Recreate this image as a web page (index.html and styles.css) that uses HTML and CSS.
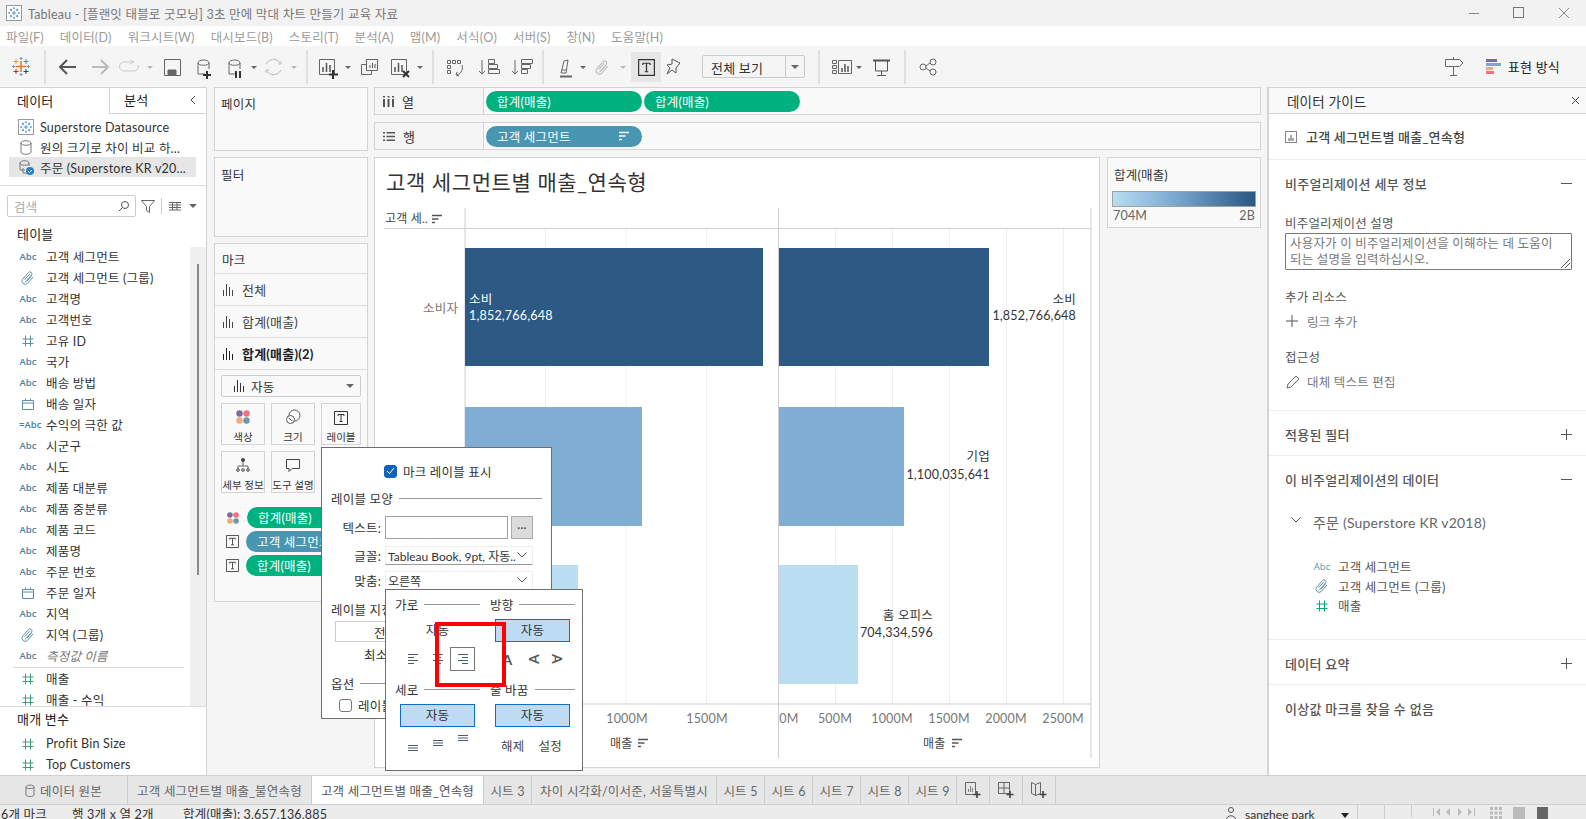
FILE: index.html
```html
<!DOCTYPE html>
<html lang="ko">
<head>
    <meta charset="utf-8">
    <title>Tableau</title>
    <link rel="stylesheet" href="styles.css">
</head>
<body>
<svg class="defs" width="0" height="0">
    <symbol id="i-clip" viewBox="0 0 16 16"><path d="M5 12.5 11.6 5a2 2 0 0 0-3-2.6L2.6 9.2a3.2 3.2 0 0 0 4.8 4.2L13 7M4.6 9.7l5-5.6M7 11l4.6-5.2" fill="none" stroke="currentColor"/></symbol>
    <symbol id="i-hash" viewBox="0 0 16 16"><path d="M5.5 2.5v11M10.5 2.500v11M2.500 6h11M2.500 10.500h11" fill="none" stroke="currentColor"/></symbol>
    <symbol id="i-cal" viewBox="0 0 16 16"><path d="M2.500 4.500h11v9h-11zM2.500 7h11M5.500 2.500v2M10.500 2.500v2" fill="none" stroke="currentColor"/></symbol>
    <symbol id="i-bars" viewBox="0 0 12 14"><path d="M1.500 13V7M4.500 13V1M7.500 13V4M10.500 13V7" fill="none" stroke="currentColor"/></symbol>
    <symbol id="i-t" viewBox="0 0 14 14"><path d="M.5.500h13v13H.5z" fill="none" stroke="currentColor"/><path d="M4 3.500h6M4 3.500v1.500M10 3.500v1.500M7 3.500v7M5.500 10.500h3" fill="none" stroke="currentColor"/></symbol>
    <symbol id="i-sort" viewBox="0 0 11 11"><path d="M0 1.500h10M0 5h6.500M0 8.500h3" fill="none" stroke="currentColor" stroke-width="1.600"/></symbol>
    <symbol id="i-dots" viewBox="0 0 16 16"><circle cx="4.500" cy="4.500" r="3.200" fill="#7f6a9c"/><circle cx="11.500" cy="4.500" r="3.200" fill="#f0717f"/><circle cx="4.500" cy="11.500" r="3.200" fill="#f1a97e"/><circle cx="11.500" cy="11.500" r="3.200" fill="#6b97a8"/></symbol>
    <symbol id="i-logo" viewBox="0 0 16 16"><path d="M8 5.500v5M5.500 8h5M4.500 3v3M3 4.500h3M11.500 3v3M10 4.500h3M4.500 10v3M3 11.500h3M11.500 10v3M10 11.500h3M8 1.500v2M7 2.500h2M8 12.500v2M7 13.500h2M2.500 7v2M1.500 8h2M13.500 7v2M12.500 8h2" fill="none" stroke="currentColor" stroke-width=".9"/></symbol>
</svg>

<header class="titlebar">
    <svg class="app-icon" width="16" height="16"><rect x=".5" y=".5" width="15" height="15" fill="#fff" stroke="#999"/><use href="#i-logo" x="1" y="1" width="14" height="14" color="#2f7fb3"/></svg>
    <span class="app-title">Tableau - [플랜잇 태블로 굿모닝] 3초 만에 막대 차트 만들기 교육 자료</span>
    <div class="win-btns">
        <svg width="12" height="12"><path d="M1 6.500h10" stroke="#888"/></svg>
        <svg width="12" height="12"><rect x=".5" y=".5" width="10" height="10" fill="none" stroke="#777"/></svg>
        <svg width="12" height="12"><path d="M1 1l10 10M11 1 1 11" stroke="#888"/></svg>
    </div>
</header>

<nav class="menubar">
    <span>파일(F)</span><span>데이터(D)</span><span>워크시트(W)</span><span>대시보드(B)</span><span>스토리(T)</span><span>분석(A)</span><span>맵(M)</span><span>서식(O)</span><span>서버(S)</span><span>창(N)</span><span>도움말(H)</span>
</nav>

<div class="toolbar">
    <svg class="tb-strip" width="694" height="41" viewBox="0 46 694 41" fill="none" stroke="#666">
        <!-- logo -->
        <path d="M21 61v11M15.500 66.500h11" stroke="#e8762c" stroke-width="1.500"/>
        <path d="M16 59v5M13.500 61.500h5" stroke="#e8a13c"/><path d="M26 59v5M23.500 61.500h5" stroke="#5b879b"/>
        <path d="M16 69v5M13.500 71.500h5" stroke="#c72037"/><path d="M26 69v5M23.500 71.500h5" stroke="#1f447a"/>
        <path d="M21 57v3M19.500 58.500h3M21 73v3M19.500 74.500h3M13.500 65v3M12 66.500h3M28.500 65v3M27 66.500h3" stroke="#7099a6"/>
        <path d="M45 50v34M307 50v34M433 50v34M543 50v34" stroke="#ccc"/>
        <!-- back / forward -->
        <path d="M76 67H60M67 60l-7 7 7 7" stroke="#555" stroke-width="2"/>
        <path d="M108 67H92M101 60l7 7-7 7" stroke="#bbb" stroke-width="2"/>
        <path d="M133 62h-9a4.500 4.500 0 0 0 0 9h10a4.500 4.500 0 0 0 4-6M130 60l4 2-4 2" stroke="#ccc"/>
        <path d="M147 66h6l-3 3z" fill="#bbb" stroke="none"/>
        <!-- save -->
        <path d="M164.500 59.500h16v16h-16z"/><path d="M168 70h8v5h-8z" fill="#666"/>
        <!-- data source add / pause -->
        <path d="M198 63v11h7M198 63c0-4 11-4 11 0v6M198 63c0 3 11 3 11 0"/>
        <path d="M207 71v8M203 75h8" stroke="#333" stroke-width="2"/>
        <path d="M229 63v11h6M229 63c0-4 11-4 11 0v6M229 63c0 3 11 3 11 0"/>
        <path d="M236 71v7M240 71v7" stroke="#333" stroke-width="2"/>
        <path d="M251 66h6l-3 3z" fill="#666" stroke="none"/>
        <path d="M266 64a8 8 0 0 1 14-1M281 70a8 8 0 0 1-14 1M278 64h3v-3M269 70h-3v3" stroke="#bbb"/>
        <path d="M291 66h6l-3 3z" fill="#bbb" stroke="none"/>
        <!-- new sheet, duplicate, clear -->
        <path d="M319.500 59.500h15v15h-15z"/><path d="M323 72v-5M326.500 72v-9M330 72v-7" stroke="#555" stroke-width="1.500"/>
        <path d="M333 70v9M329 74.500h9" stroke="#333" stroke-width="2"/>
        <path d="M345 66h6l-3 3z" fill="#666" stroke="none"/>
        <path d="M366.500 59.500h11v11h-11zM361.500 64.500h5M361.500 64.500v10h10v-4" /><path d="M370 68v-3M372.500 68v-5M375 68v-4" stroke="#555"/>
        <path d="M391.500 59.500h15v15h-15z"/><path d="M395 72v-5M398.500 72v-9M402 72v-7" stroke="#555" stroke-width="1.500"/>
        <path d="M403 71l6 6M409 71l-6 6" stroke="#333" stroke-width="2"/>
        <path d="M417 66h6l-3 3z" fill="#666" stroke="none"/>
        <!-- swap, sort -->
        <path d="M447.500 60.500h3v3h-3zM452.500 60.500h3v3h-3zM457.500 60.500h3v3h-3zM447.500 65.500h3v3h-3zM447.500 70.500h3v3h-3zM462 65c1 4 0 8-5 10M457 72l-1 3 3 1"/>
        <path d="M482 60v14M479 71l3 3 3-3M488.500 59.500h6v4h-6zM488.500 64.500h9v4h-9zM488.500 69.500h11v4h-11z"/>
        <path d="M515 60v14M512 71l3 3 3-3M521.500 59.500h11v4h-11zM521.500 64.500h9v4h-9zM521.500 69.500h6v4h-6z"/>
        <!-- highlight, attach -->
        <path d="M561 73l3-12 4-1-2 13z M562 70h5" stroke="#666"/><path d="M560 76.500h12" stroke="#666" stroke-width="2"/>
        <path d="M580 66h6l-3 3z" fill="#666" stroke="none"/>
        <use href="#i-clip" x="594" y="59" width="17" height="17" color="#bbb" stroke="none"/>
        <path d="M620 66h6l-3 3z" fill="#bbb" stroke="none"/>
        <!-- text button, pin -->
        <rect x="631" y="52" width="30" height="30" fill="#e6e6e6" stroke="none"/>
        <use href="#i-t" x="638" y="59" width="17" height="17" color="#333" stroke="none"/>
        <path d="M672 59l8 4-4 5 0 5-4-3-5 4 3-6-3-3 5-1z" stroke="#555"/>
    </svg>
    <div class="fit-select"><span class="fit-text">전체 보기</span><span class="fit-arrow"></span></div>
    <svg class="tb-strip" width="135" height="41" viewBox="809 46 135 41" fill="none" stroke="#666">
        <path d="M821 50v34M907 50v34" stroke="#ccc"/>
        <path d="M834.500 60.500h4v3h-4zM834.500 65.500h4v3h-4zM834.500 70.500h4v3h-4zM840.500 60.500h13v13h-13z"/>
        <path d="M844 72v-4M847 72v-8M850 72v-6" stroke="#555" stroke-width="1.500"/>
        <path d="M858 66h6l-3 3z" fill="#666" stroke="none"/>
        <path d="M877.500 61v10h12V61M883.500 71v5M879 75.500h9" stroke="#555"/><path d="M875 60.500h17" stroke="#555" stroke-width="2"/>
        <circle cx="935" cy="62" r="3"/><circle cx="925" cy="67" r="3"/><circle cx="935" cy="72" r="3"/><path d="M928 66l4-3M928 68l4 3"/>
    </svg>
    <div class="tb-right">
        <svg width="20" height="20" fill="none" stroke="#666"><path d="M1.500 2.500h14l3.500 3.500-3.500 3.500h-14zM9.500 2.500V0M9.500 9.500v9M6 18.500h7"/></svg>
        <svg class="showme-icon" width="15" height="15"><rect width="11" height="3" fill="#7f6a9c"/><rect y="4" width="15" height="3" fill="#7fa6c9"/><rect y="8" width="7" height="3" fill="#f1a97e"/><rect y="12" width="8" height="3" fill="#f0717f"/></svg>
        <span class="showme-text">표현 방식</span>
    </div>
</div>

<main class="workspace">
    <aside class="data-pane">
        <div class="pane-tabs">
            <div class="pane-tab active">데이터</div>
            <div class="pane-tab">분석</div>
            <svg class="collapse" width="8" height="10" fill="none" stroke="#555"><path d="M6 1 2 5l4 4"/></svg>
        </div>
        <div class="sources">
            <div class="source">
                <svg width="16" height="16"><rect x=".5" y=".5" width="15" height="15" fill="#fff" stroke="#999"/><use href="#i-logo" x="1" y="1" width="14" height="14" color="#2f7fb3"/></svg>
                <span>Superstore Datasource</span>
            </div>
            <div class="source">
                <svg width="16" height="16" fill="none" stroke="#777"><path d="M3 4v9c0 3 10 3 10 0V4M3 4c0-3 10-3 10 0M3 4c0 3 10 3 10 0"/></svg>
                <span>원의 크기로 차이 비교 하...</span>
            </div>
            <div class="source selected">
                <svg width="16" height="16" fill="none" stroke="#777"><path d="M2 4v7h5M2 4c0-3 9-3 9 0v3M2 4c0 3 9 3 9 0M5 9v5h4"/><circle cx="12" cy="12" r="4" fill="#2c7fb8" stroke="none"/><path d="M10 12l1.500 1.500L14 11" stroke="#fff"/></svg>
                <span>주문 (Superstore KR v20...</span>
            </div>
        </div>
        <div class="search-row">
            <div class="search-box"><span>검색</span>
                <svg width="12" height="12" fill="none" stroke="#555"><circle cx="7" cy="5" r="3.500"/><path d="M4.500 7.500 1 11"/></svg>
            </div>
            <svg class="filter-icon" width="14" height="14" fill="none" stroke="#666"><path d="M.5 1.500h13L8.500 7.500v6l-3-2v-4z"/></svg>
            <span class="search-sep"></span>
            <svg width="14" height="10" fill="none" stroke="#666"><path d="M1 1.500h12M1 4h12M1 6.500h12M1 9h12M4.500 1v8M9 1v8"/></svg>
            <span class="mini-arrow"></span>
        </div>
        <div class="group-title">테이블</div>
        <div class="field-scroll">
            <div class="scroll-track"><div class="scroll-thumb"></div></div>
            <div class="field"><span class="abc">Abc</span>고객 세그먼트</div>
            <div class="field"><svg class="fi dim" width="16" height="16"><use href="#i-clip"/></svg>고객 세그먼트 (그룹)</div>
            <div class="field"><span class="abc">Abc</span>고객명</div>
            <div class="field"><span class="abc">Abc</span>고객번호</div>
            <div class="field"><svg class="fi dim" width="16" height="16"><use href="#i-hash"/></svg>고유 ID</div>
            <div class="field"><span class="abc">Abc</span>국가</div>
            <div class="field"><span class="abc">Abc</span>배송 방법</div>
            <div class="field"><svg class="fi dim" width="16" height="16"><use href="#i-cal"/></svg>배송 일자</div>
            <div class="field"><span class="abc">=Abc</span>수익의 극한 값</div>
            <div class="field"><span class="abc">Abc</span>시군구</div>
            <div class="field"><span class="abc">Abc</span>시도</div>
            <div class="field"><span class="abc">Abc</span>제품 대분류</div>
            <div class="field"><span class="abc">Abc</span>제품 중분류</div>
            <div class="field"><span class="abc">Abc</span>제품 코드</div>
            <div class="field"><span class="abc">Abc</span>제품명</div>
            <div class="field"><span class="abc">Abc</span>주문 번호</div>
            <div class="field"><svg class="fi dim" width="16" height="16"><use href="#i-cal"/></svg>주문 일자</div>
            <div class="field"><span class="abc">Abc</span>지역</div>
            <div class="field"><svg class="fi dim" width="16" height="16"><use href="#i-clip"/></svg>지역 (그룹)</div>
            <div class="field measure-names"><span class="abc">Abc</span><em>측정값 이름</em></div>
            <div class="field-sep"></div>
            <div class="field"><svg class="fi green" width="16" height="16"><use href="#i-hash"/></svg>매출</div>
            <div class="field"><svg class="fi green" width="16" height="16"><use href="#i-hash"/></svg>매출 - 수익</div>
        </div>
        <div class="params">
            <div class="group-title">매개 변수</div>
            <div class="field"><svg class="fi green" width="16" height="16"><use href="#i-hash"/></svg>Profit Bin Size</div>
            <div class="field"><svg class="fi green" width="16" height="16"><use href="#i-hash"/></svg>Top Customers</div>
        </div>
    </aside>

    <section class="side-cards">
        <div class="card pages">페이지</div>
        <div class="card filters">필터</div>
        <div class="card marks">
            <div class="marks-title">마크</div>
            <div class="marks-row"><svg width="12" height="14"><use href="#i-bars"/></svg>전체</div>
            <div class="marks-row"><svg width="12" height="14"><use href="#i-bars"/></svg>합계(매출)</div>
            <div class="marks-row bold"><svg width="12" height="14"><use href="#i-bars"/></svg>합계(매출)(2)</div>
            <div class="mark-type"><svg width="12" height="14"><use href="#i-bars"/></svg><span>자동</span><i class="mini-arrow"></i></div>
            <div class="mark-btns">
                <div class="mark-btn"><svg width="16" height="16"><use href="#i-dots"/></svg>색상</div>
                <div class="mark-btn"><svg width="16" height="16" fill="none" stroke="#555"><circle cx="9.500" cy="6.500" r="5.500" fill="#fff"/><circle cx="5.500" cy="10.500" r="4" fill="#fff"/><path d="M3.500 9l4 3"/></svg>크기</div>
                <div class="mark-btn"><svg width="14" height="14"><use href="#i-t"/></svg>레이블</div>
                <div class="mark-btn"><svg width="16" height="16" fill="#444" stroke="#444"><circle cx="8" cy="3" r="2" stroke="none"/><path d="M8 3v6M3 12V9h10v3" fill="none" stroke-width=".8"/><circle cx="3" cy="13" r="1.300" fill="none"/><circle cx="8" cy="13" r="1.300" fill="none"/><circle cx="13" cy="13" r="1.300" fill="none"/></svg>세부 정보</div>
                <div class="mark-btn"><svg width="16" height="16" fill="none" stroke="#444"><path d="M1.500 2.500h13v9H7l-3 3v-3H1.500z"/></svg>도구 설명</div>
            </div>
            <div class="mark-pills">
                <div class="mark-pill-row"><svg width="14" height="14"><use href="#i-dots"/></svg><div class="pill measure">합계(매출)</div></div>
                <div class="mark-pill-row"><svg width="13" height="13" color="#444"><use href="#i-t"/></svg><div class="pill dimension">고객 세그먼트</div></div>
                <div class="mark-pill-row"><svg width="13" height="13" color="#444"><use href="#i-t"/></svg><div class="pill measure">합계(매출)</div></div>
            </div>
        </div>
    </section>

    <section class="view-area">
        <div class="shelf">
            <div class="shelf-label"><svg width="11" height="11" fill="#555"><path d="M0 3h2v8H0zM4.500 3h2v8h-2zM9 3h2v8H9zM0 0h2v1.500H0zM4.500 0h2v1.500h-2zM9 0h2v1.500H9z"/></svg>열</div>
            <div class="shelf-pills"><div class="pill measure">합계(매출)</div><div class="pill measure">합계(매출)</div></div>
        </div>
        <div class="shelf">
            <div class="shelf-label"><svg width="12" height="11" fill="#555"><path d="M0 1h2v1.500H0zM3.500 1H12v1.500H3.500zM0 4.700h2v1.500H0zM3.500 4.700H12v1.500H3.500zM0 8.500h2V10H0zM3.500 8.500H12V10H3.500z"/></svg>행</div>
            <div class="shelf-pills"><div class="pill dimension">고객 세그먼트<svg class="pill-sort" width="11" height="11"><use href="#i-sort"/></svg></div></div>
        </div>
        <div class="view-row">
            <div class="chart-card">
                <h1 class="chart-title">고객 세그먼트별 매출_연속형</h1>
                <svg class="chart" width="724" height="561" viewBox="375 206 724 561">
                    <path d="M545.500 229v475M626 229v475M706.500 229v475M835.500 229v475M892.500 229v475M949.500 229v475M1006.500 229v475M1063.500 229v475" stroke="#eee"/>
                    <path d="M384 228.500h707M384 704h707M465 208v550M778.500 208v550M1091 208v550" stroke="#cfcfcf" fill="none"/>
                    <text class="hdr" x="385" y="223">고객 세..</text>
                    <use href="#i-sort" x="432" y="214" width="11" height="11" color="#555"/>
                    <text class="axis" x="423" y="313">소비자</text>

                    <rect class="dark" x="465" y="248" width="298" height="118"/>
                    <rect class="mid" x="465" y="407" width="177" height="119"/>
                    <rect class="light" x="465" y="565" width="113" height="119"/>
                    <rect class="dark" x="779" y="248" width="210" height="118"/>
                    <rect class="mid" x="779" y="407" width="125" height="119"/>
                    <rect class="light" x="779" y="565" width="79" height="119"/>

                    <text class="lbl-in" x="469" y="304">소비</text>
                    <text class="lbl-in" x="469" y="320">1,852,766,648</text>
                    <text class="lbl end" x="1076" y="304">소비</text>
                    <text class="lbl end" x="1076" y="320">1,852,766,648</text>
                    <text class="lbl end" x="990" y="461">기업</text>
                    <text class="lbl end" x="990" y="479">1,100,035,641</text>
                    <text class="lbl end" x="933" y="620">홈 오피스</text>
                    <text class="lbl end" x="933" y="637">704,334,596</text>

                    <text class="axis mid-a" x="627" y="723">1000M</text>
                    <text class="axis mid-a" x="707" y="723">1500M</text>
                    <text class="axis mid-a" x="789" y="723">0M</text>
                    <text class="axis mid-a" x="835" y="723">500M</text>
                    <text class="axis mid-a" x="892" y="723">1000M</text>
                    <text class="axis mid-a" x="949" y="723">1500M</text>
                    <text class="axis mid-a" x="1006" y="723">2000M</text>
                    <text class="axis mid-a" x="1063" y="723">2500M</text>
                    <text class="hdr" x="610" y="748">매출</text>
                    <use href="#i-sort" x="638" y="738" width="11" height="11" color="#555"/>
                    <text class="hdr" x="923" y="748">매출</text>
                    <use href="#i-sort" x="952" y="738" width="11" height="11" color="#555"/>
                </svg>
            </div>
            <div class="legend-card">
                <div class="legend-title">합계(매출)</div>
                <div class="legend-ramp"></div>
                <div class="legend-scale"><span>704M</span><span>2B</span></div>
            </div>
        </div>
    </section>

    <aside class="guide">
        <div class="guide-head">데이터 가이드<svg width="9" height="9" stroke="#444"><path d="M1 1l7 7M8 1 1 8"/></svg></div>
        <div class="guide-sheet">
            <svg width="12" height="12"><rect x=".5" y=".5" width="11" height="11" fill="#fff" stroke="#888"/><path d="M3 10V7h2V4h2v3h2v3z" fill="#aaa"/></svg>
            고객 세그먼트별 매출_연속형
        </div>
        <div class="guide-sec detail">
            <div class="sec-head">비주얼리제이션 세부 정보<span class="minus"></span></div>
            <div class="sub first">비주얼리제이션 설명</div>
            <div class="desc-box">사용자가 이 비주얼리제이션을 이해하는 데 도움이<br>되는 설명을 입력하십시오.<svg class="grip" width="9" height="9" stroke="#555"><path d="M0 9l9-9M4 9l5-5"/></svg></div>
            <div class="sub">추가 리소스</div>
            <div class="guide-link"><svg width="12" height="12" stroke="#555"><path d="M6 0v12M0 6h12"/></svg>링크 추가</div>
            <div class="sub">접근성</div>
            <div class="guide-link pencil"><svg width="15" height="15" fill="none" stroke="#666"><path d="M1 14l1-4 8-8 3 3-8 8z"/></svg>대체 텍스트 편집</div>
        </div>
        <div class="guide-sec short"><div class="sec-head">적용된 필터<span class="plus"></span></div></div>
        <div class="guide-sec data">
            <div class="sec-head">이 비주얼리제이션의 데이터<span class="minus"></span></div>
            <div class="ds-name"><svg width="10" height="6" fill="none" stroke="#555"><path d="M.5.500 5 5 9.500.500"/></svg>주문 (Superstore KR v2018)</div>
            <div class="guide-field"><span class="abc">Abc</span>고객 세그먼트</div>
            <div class="guide-field"><svg class="fi dim" width="16" height="16"><use href="#i-clip"/></svg>고객 세그먼트 (그룹)</div>
            <div class="guide-field"><svg class="fi teal" width="16" height="16"><use href="#i-hash"/></svg>매출</div>
        </div>
        <div class="guide-sec short"><div class="sec-head">데이터 요약<span class="plus"></span></div></div>
        <div class="guide-sec"><div class="sec-head">이상값 마크를 찾을 수 없음</div></div>
    </aside>
</main>

<div class="sheet-tabs">
    <div class="tab tab-src"><svg width="10" height="13" fill="none" stroke="#777"><path d="M1 3v8c0 2 8 2 8 0V3M1 3c0-2.500 8-2.500 8 0M1 3c0 2 8 2 8 0"/></svg>데이터 원본</div>
    <div class="tab t184">고객 세그먼트별 매출_불연속형</div>
    <div class="tab active t172">고객 세그먼트별 매출_연속형</div>
    <div class="tab t48">시트 3</div>
    <div class="tab t185">차이 시각화/이서준, 서울특별시</div>
    <div class="tab t48">시트 5</div>
    <div class="tab t48">시트 6</div>
    <div class="tab t48">시트 7</div>
    <div class="tab t48">시트 8</div>
    <div class="tab t48">시트 9</div>
    <div class="tab t33"><svg width="18" height="18" fill="none" stroke="#666"><path d="M1.500 1.500h10v12h-10z"/><path d="M4.500 11V8M6.500 11V5M8.500 11V7" stroke-width=".8"/><path d="M13 10v7M9.500 13.500h7" stroke="#444" stroke-width="1.600"/></svg></div>
    <div class="tab t33"><svg width="18" height="18" fill="none" stroke="#666"><path d="M1.500 1.500h11v11h-11zM7 1.500v11M1.500 7h11"/><path d="M13 10v7M9.500 13.500h7" stroke="#444" stroke-width="1.600"/></svg></div>
    <div class="tab t33"><svg width="18" height="18" fill="none" stroke="#666"><path d="M1.500 1.500l4 2 5-2v11l-5 2-4-2zM5.500 3.500v11"/><path d="M13 10v7M9.500 13.500h7" stroke="#444" stroke-width="1.600"/></svg></div>
</div>

<footer class="statusbar">
    <span class="st-marks">6개 마크</span>
    <span class="st-dims">행 3개 x 열 2개</span>
    <span class="st-sum">합계(매출): 3,657,136,885</span>
    <span class="st-user"><svg width="12" height="14" fill="none" stroke="#555"><circle cx="6" cy="3" r="2.500"/><path d="M1 14c0-7 10-7 10 0"/></svg>sanghee park<i class="user-arrow"></i></span>
    <span class="st-cell"></span><span class="st-cell"></span>
    <span class="st-nav">
        <svg width="46" height="10" fill="#bbb"><path d="M2 1v8h1V1zM9 1 5 5l4 4zM19 1l-4 4 4 4zM27 1l4 4-4 4zM37 1l4 4-4 4zM43 1v8h1V1z"/></svg>
    </span>
    <span class="st-views">
        <svg width="12" height="12" fill="#bbb"><path d="M0 0h3v3H0zM4.500 0h3v3h-3zM9 0h3v3H9zM0 4.500h3v3H0zM4.500 4.500h3v3h-3zM9 4.500h3v3H9zM0 9h3v3H0zM4.500 9h3v3h-3zM9 9h3v3H9z"/></svg>
        <svg width="12" height="12" fill="#bbb"><path d="M0 0h12v12H0z"/></svg>
        <svg width="12" height="12" fill="#666"><path d="M1 0h11v14H1z"/></svg>
    </span>
</footer>

<!-- 레이블 팝업 -->
<div class="popup label-popup">
    <div class="check-row"><span class="check on"><svg width="9" height="8" fill="none" stroke="#fff"><path d="M1 4l2.500 2.500L8 1"/></svg></span>마크 레이블 표시</div>
    <div class="pop-sec first-sec">레이블 모양<span class="rule"></span></div>
    <div class="form-row r1"><label>텍스트:</label><span class="text-input"></span><span class="more-btn">...</span></div>
    <div class="form-row"><label>글꼴:</label><span class="select">Tableau Book, 9pt, 자동..<svg width="10" height="6" fill="none" stroke="#555"><path d="M.5.500 5 5 9.500.500"/></svg></span></div>
    <div class="form-row"><label>맞춤:</label><span class="select">오른쪽<svg width="10" height="6" fill="none" stroke="#555"><path d="M.5.500 5 5 9.500.500"/></svg></span></div>
    <div class="pop-sec assign">레이블 지정<span class="rule"></span></div>
    <div class="scope-btn">전</div>
    <div class="scope-min">최소</div>
    <div class="pop-sec opt">옵션<span class="rule"></span></div>
    <div class="check-row opt-check"><span class="check"></span>레이블</div>
</div>

<!-- 맞춤 팝업 -->
<div class="popup align-popup">
    <div class="pop-row head">
        <div class="pop-head">가로<span class="rule"></span></div>
        <div class="pop-head">방향<span class="rule"></span></div>
    </div>
    <div class="pop-row auto">
        <div class="auto-btn plain">자동</div>
        <div class="auto-btn on">자동</div>
    </div>
    <div class="pop-row icons">
        <div class="icon-set">
            <span class="ic"><svg width="12" height="10" stroke="#4a5a70"><path d="M1 .5h10M1 3.500h6M1 6.500h10M1 9.500h6"/></svg></span>
            <span class="ic"><svg width="12" height="10" stroke="#4a5a70"><path d="M1 .5h10M3 3.500h6M1 6.500h10M3 9.500h6"/></svg></span>
            <span class="ic picked"><svg width="12" height="10" stroke="#4a5a70"><path d="M1 .5h10M5 3.500h6M1 6.500h10M5 9.500h6"/></svg></span>
        </div>
        <div class="icon-set">
            <span class="ic rot">A</span><span class="ic rot left">A</span><span class="ic rot right">A</span>
        </div>
    </div>
    <div class="pop-row head second">
        <div class="pop-head">세로<span class="rule"></span></div>
        <div class="pop-head">줄 바꿈<span class="rule"></span></div>
    </div>
    <div class="pop-row auto">
        <div class="auto-btn on">자동</div>
        <div class="auto-btn on">자동</div>
    </div>
    <div class="pop-row icons last">
        <div class="icon-set">
            <span class="ic v-bottom"><svg width="12" height="6" stroke="#4a5a70"><path d="M1 .5h10M1 3h10M1 5.500h10"/></svg></span>
            <span class="ic v-mid"><svg width="12" height="6" stroke="#4a5a70"><path d="M1 .5h10M1 3h10M1 5.500h10"/></svg></span>
            <span class="ic v-top"><svg width="12" height="6" stroke="#4a5a70"><path d="M1 .5h10M1 3h10M1 5.500h10"/></svg></span>
        </div>
        <div class="wrap-set"><span>해제</span><span>설정</span></div>
    </div>
</div>

<div class="red-box"></div>
</body>
</html>
```

FILE: styles.css
```css
/* page */
* {
    box-sizing: border-box;
}

html, body {
    margin: 0;
    height: 819px;
    overflow: hidden;
}

body {
    position: relative;
    display: flex;
    flex-direction: column;
    width: 1586px;
    font-family: "Lato", "Noto Sans CJK KR", sans-serif;
    font-size: 12.5px;
    letter-spacing: .2px;
    color: #333;
    background: #f5f5f5;
}

svg {
    display: block;
    flex: none;
}

.defs {
    position: absolute;
}

/* window chrome */
.titlebar {
    display: flex;
    align-items: center;
    height: 26px;
    padding-left: 6px;
    background: #f2f2f2;
    color: #777;
}

.app-title {
    margin-left: 6px;
}

.win-btns {
    display: flex;
    gap: 33px;
    margin-left: auto;
    margin-right: 16px;
}

.menubar {
    display: flex;
    align-items: center;
    gap: 16px;
    height: 20px;
    padding-left: 6px;
    background: #fff;
    color: #9b9b9b;
}

.toolbar {
    display: flex;
    align-items: center;
    height: 41px;
    background: #f5f5f5;
}

.fit-select {
    display: flex;
    align-items: stretch;
    width: 103px;
    height: 23px;
    margin: 0 2px 0 8px;
    border: 1px solid #ccc;
    border-radius: 2px;
    background: #f5f5f5;
}

.fit-text {
    flex: 1;
    padding: 2px 0 0 8px;
    font-size: 13px;
    border-right: 1px solid #ccc;
}

.fit-arrow {
    position: relative;
    width: 18px;
}

.fit-arrow::after {
    content: "";
    position: absolute;
    left: 5px;
    top: 9px;
    border: 4px solid transparent;
    border-top: 4px solid #666;
}

.tb-right {
    display: flex;
    align-items: center;
    margin-left: auto;
    padding-right: 26px;
}

.showme-icon {
    margin-left: 22px;
}

.showme-text {
    margin-left: 7px;
    font-size: 13px;
    color: #222;
}

/* main layout */
.workspace {
    display: flex;
    height: 688px;
}

.data-pane {
    display: flex;
    flex-direction: column;
    width: 207px;
    background: #fff;
    border-right: 1px solid #d4d4d4;
    border-top: 1px solid #d4d4d4;
}

.pane-tabs {
    position: relative;
    display: flex;
    height: 26px;
}

.pane-tab {
    display: flex;
    align-items: center;
    padding: 0 0 2px 17px;
    width: 110px;
    font-size: 13px;
    color: #222;
    border-bottom: 1px solid #d4d4d4;
}

.pane-tab.active {
    border-bottom: 0;
    border-right: 1px solid #d4d4d4;
}

.pane-tab + .pane-tab {
    flex: 1;
    padding-left: 14px;
}

.collapse {
    position: absolute;
    right: 9px;
    top: 7px;
}

.sources {
    padding: 3px 0 5px 9px;
    height: 72px;
    border-bottom: 1px solid #ddd;
}

.source {
    display: flex;
    align-items: center;
    gap: 6px;
    width: 187px;
    height: 20px;
    padding-left: 9px;
    white-space: nowrap;
}

.source.selected {
    background: #e6e6e6;
}

.search-row {
    display: flex;
    align-items: center;
    height: 22px;
    margin-top: 9px;
    padding-left: 7px;
}

.search-box {
    display: flex;
    align-items: center;
    justify-content: space-between;
    width: 129px;
    height: 22px;
    padding: 0 5px 0 6px;
    border: 1px solid #ccc;
    border-radius: 2px;
    color: #aaa;
}

.filter-icon {
    margin-left: 5px;
}

.search-sep {
    width: 1px;
    height: 16px;
    margin: 0 6px;
    background: #ccc;
}

.mini-arrow {
    display: block;
    margin-left: 7px;
    border: 4px solid transparent;
    border-top: 4px solid #666;
    border-bottom: 0;
}

.group-title {
    height: 20px;
    padding: 0 0 0 17px;
    margin-top: 7px;
    font-size: 13px;
    line-height: 20px;
    color: #222;
}

.field-scroll {
    position: relative;
    height: 462px;
    padding-top: 2px;
    overflow: hidden;
}

.scroll-track {
    position: absolute;
    right: 0;
    top: 3px;
    bottom: 0;
    width: 16px;
    background: #f0f0f0;
}

.scroll-thumb {
    width: 2px;
    height: 311px;
    margin: 17px 0 0 7px;
    background: #8a8a8a;
}

.field {
    display: flex;
    align-items: center;
    height: 21px;
    padding-left: 19px;
    white-space: nowrap;
}

.abc {
    flex: none;
    width: 18px;
    margin-right: 9px;
    font-family: "Open Sans", sans-serif;
    font-size: 9.500px;
    font-weight: 600;
    letter-spacing: 0;
    text-align: center;
    color: #4c7f9f;
    white-space: nowrap;
}

.fi {
    margin: 0 10px 0 1px;
}

.dim {
    color: #5f8ea8;
}

.green {
    color: #3f9b77;
}

.teal {
    color: #00a878;
}

.measure-names em {
    color: #777;
}

.field-sep {
    width: 171px;
    height: 1px;
    margin: 1px 0 0 13px;
    background: #ddd;
}

.params {
    flex: 1;
    border-top: 1px solid #ddd;
}

.params .group-title {
    margin-top: 2px;
}

.params .field {
    height: 21px;
    position: relative;
    top: 4px;
}

/* shelves and cards */
.side-cards {
    display: flex;
    flex-direction: column;
    gap: 6px;
    width: 154px;
    margin-left: 7px;
}

.card {
    border: 1px solid #d4d4d4;
    background: #f9f9f9;
    color: #333;
}

.pages {
    height: 64px;
    padding: 6px 0 0 6px;
}

.filters {
    height: 80px;
    padding: 7px 0 0 6px;
}

.marks {
    height: 359px;
}

.marks-title {
    height: 30px;
    padding: 6px 0 0 7px;
    border-bottom: 1px solid #ddd;
}

.marks-row {
    display: flex;
    align-items: center;
    gap: 8px;
    height: 32px;
    padding-left: 7px;
    font-size: 13px;
    border-bottom: 1px solid #ddd;
    color: #444;
}

.marks-row.bold {
    font-weight: 700;
    color: #222;
}

.mark-type {
    display: flex;
    align-items: center;
    gap: 6px;
    width: 140px;
    height: 22px;
    margin: 5px 0 0 6px;
    padding-left: 11px;
    border: 1px solid #ccc;
    border-radius: 2px;
}

.mark-type span {
    flex: 1;
}

.mark-type .mini-arrow {
    margin-right: 6px;
}

.mark-btns {
    display: grid;
    grid-template-columns: 44px 44px 40px;
    grid-auto-rows: 42px;
    gap: 6px;
    margin: 6px 0 0 6px;
}

.mark-btn {
    display: flex;
    flex-direction: column;
    align-items: center;
    justify-content: flex-end;
    gap: 4px;
    border: 1px solid #d4d4d4;
    font-size: 10.500px;
    letter-spacing: 0;
    white-space: nowrap;
    color: #333;
}

.mark-pills {
    display: flex;
    flex-direction: column;
    gap: 3px;
    margin: 14px 0 0 11px;
}

.mark-pill-row {
    display: flex;
    align-items: center;
    gap: 7px;
}

.mark-pills .pill {
    width: 110px;
}

.pill {
    display: flex;
    align-items: center;
    justify-content: space-between;
    height: 21px;
    padding: 0 11px;
    border-radius: 11px;
    color: #fff;
    white-space: nowrap;
}

.measure {
    background: #00b180;
}

.dimension {
    background: #4996b2;
}

.view-area {
    display: flex;
    flex-direction: column;
    width: 887px;
    margin-left: 6px;
}

.shelf {
    display: flex;
    height: 28px;
    margin-bottom: 7px;
    border: 1px solid #d4d4d4;
    background: #f9f9f9;
}

.shelf-label {
    display: flex;
    align-items: center;
    gap: 8px;
    width: 109px;
    padding-left: 8px;
    font-size: 13px;
    background: #f5f5f5;
    border-right: 1px solid #d4d4d4;
}

.shelf-pills {
    display: flex;
    align-items: center;
    gap: 2px;
    padding-left: 2px;
}

.shelf-pills .pill {
    width: 156px;
}

.pill-sort {
    margin-right: 1px;
}

.view-row {
    display: flex;
    gap: 7px;
    margin-top: 0;
}

.chart-card {
    width: 726px;
    height: 611px;
    border: 1px solid #d4d4d4;
    background: #fff;
    overflow: hidden;
}

.chart-title {
    height: 48px;
    margin: 0;
    padding: 9px 0 0 11px;
    font-size: 21px;
    font-weight: 400;
    letter-spacing: .6px;
    line-height: 30px;
    color: #333;
}

.chart text {
    font-family: "Lato", "Noto Sans CJK KR", sans-serif;
    font-size: 12.5px;
    letter-spacing: .2px;
}

.chart .hdr {
    font-size: 12px;
    fill: #444;
}

.chart .axis {
    fill: #777;
}

.chart .mid-a {
    text-anchor: middle;
}

.chart .lbl {
    fill: #333;
}

.chart .end {
    text-anchor: end;
}

.chart .lbl-in {
    fill: #fff;
}

.dark {
    fill: #2c5a85;
}

.mid {
    fill: #7fadd3;
}

.light {
    fill: #b9ddf1;
}

.legend-card {
    width: 154px;
    height: 71px;
    padding: 7px 4px 0;
    border: 1px solid #d4d4d4;
    background: #f9f9f9;
}

.legend-title {
    height: 19px;
    padding-left: 2px;
}

.legend-ramp {
    height: 16px;
    margin-top: 7px;
    border: 1px solid #a0a0a0;
    background: linear-gradient(to right, #b9ddf1, #7fadd3 40%, #2a5783);
}

.legend-scale {
    display: flex;
    justify-content: space-between;
    color: #666;
    padding: 1px 1px 0;
}

/* data guide */
.guide {
    flex: 1;
    margin-left: 6px;
    background: #fff;
    border-left: 2px solid #d4d4d4;
    border-top: 1px solid #d4d4d4;
    color: #555;
}

.guide-head {
    display: flex;
    align-items: center;
    justify-content: space-between;
    height: 26px;
    padding: 0 6px 0 18px;
    font-size: 13.500px;
    background: #f9f9f9;
    color: #333;
    border-bottom: 1px solid #d4d4d4;
}

.guide-sheet {
    display: flex;
    align-items: center;
    gap: 9px;
    height: 46px;
    padding-left: 16px;
    font-size: 13px;
    font-weight: 500;
    color: #444;
    border-bottom: 1px solid #eee;
}

.guide-sec {
    padding: 0 0 0 16px;
    border-bottom: 1px solid #eee;
}

.guide-sec:last-child {
    border-bottom: 0;
}

.sec-head {
    display: flex;
    align-items: center;
    justify-content: space-between;
    height: 45px;
    padding: 1px 14px 0 0;
    font-size: 13px;
    font-weight: 500;
    letter-spacing: .3px;
    color: #555;
}

.detail {
    height: 251px;
}

.short {
    height: 45px;
}

.data {
    height: 184px;
}

.minus, .plus {
    position: relative;
    display: block;
    width: 11px;
    height: 1px;
    background: #555;
}

.plus::after {
    content: "";
    position: absolute;
    left: 5px;
    top: -5px;
    width: 1px;
    height: 11px;
    background: #555;
}

.sub {
    height: 18px;
    margin-top: 17px;
    color: #555;
}

.sub.first {
    margin-top: 8px;
}

.desc-box {
    position: relative;
    width: 287px;
    height: 37px;
    margin-top: 2px;
    padding: 2px 4px;
    border: 1px solid #777;
    border-radius: 1px;
    line-height: 16px;
    color: #777;
    white-space: nowrap;
}

.grip {
    position: absolute;
    right: 1px;
    bottom: 1px;
}

.guide-link {
    display: flex;
    align-items: center;
    gap: 9px;
    height: 18px;
    margin-top: 7px;
    padding-left: 1px;
    color: #777;
}

.guide-link.pencil {
    gap: 6px;
}

.ds-name {
    display: flex;
    align-items: center;
    gap: 12px;
    height: 22px;
    margin-top: 10px;
    padding-left: 6px;
    font-size: 14px;
    color: #666;
}

.ds-name svg {
    margin-bottom: 4px;
}

.guide-field {
    display: flex;
    align-items: center;
    height: 19.500px;
    padding-left: 28px;
    color: #555;
}

.guide-field:nth-child(3) {
    margin-top: 24px;
}

.guide-field .abc {
    margin-right: 7px;
    font-weight: 500;
    color: #5d94b0;
}

.guide-field .fi {
    margin: 0 8px 0 1px;
}

/* bottom */
.sheet-tabs {
    display: flex;
    height: 30px;
    margin-top: 0;
    background: #e6e6e6;
    border-top: 1px solid #d0d0d0;
    border-bottom: 1px solid #d0d0d0;
}

.tab {
    display: flex;
    align-items: center;
    justify-content: center;
    gap: 5px;
    border-right: 1px solid #ccc;
    color: #666;
    white-space: nowrap;
}

.tab.active {
    background: #fff;
    color: #555;
}

.tab-src {
    width: 128px;
}

.t184 {
    width: 184px;
}

.t172 {
    width: 172px;
}

.t185 {
    width: 185px;
}

.t48 {
    width: 48px;
}

.t33 {
    width: 33px;
}

.statusbar {
    display: flex;
    align-items: flex-start;
    height: 14px;
    padding-left: 1px;
    background: #ececec;
    overflow: hidden;
    color: #333;
    line-height: 16px;
}

.statusbar > span {
    padding-top: 2px;
    white-space: nowrap;
}

.st-marks {
    width: 71px;
}

.st-dims {
    width: 111px;
}

.st-sum {
    width: 1042px;
}

.st-user {
    display: flex;
    gap: 8px;
    width: 132px;
    font-size: 12px;
    letter-spacing: 0;
}

.user-arrow {
    display: block;
    margin: 6px 0 0 18px;
    border: 4px solid transparent;
    border-top: 5px solid #222;
    border-bottom: 0;
}

.st-cell {
    width: 27px;
    height: 14px;
    border-left: 1px solid #ccc;
}

.st-nav {
    width: 70px;
    padding-left: 19px;
    border-left: 1px solid #ccc;
}

.st-views {
    display: flex;
    gap: 11px;
    padding-left: 9px;
}

/* popups over the view */
.popup {
    position: absolute;
    background: #fff;
    border: 1px solid #6e6e6e;
    color: #333;
}

.label-popup {
    left: 321px;
    top: 447px;
    width: 231px;
    height: 272px;
    padding: 15px 9px 0;
}

.check-row {
    display: flex;
    align-items: center;
    gap: 6px;
    height: 16px;
    padding-left: 53px;
    white-space: nowrap;
    overflow: hidden;
}

.check {
    display: flex;
    align-items: center;
    justify-content: center;
    flex: none;
    width: 13px;
    height: 13px;
    border: 1px solid #777;
    border-radius: 3px;
}

.check.on {
    background: #0f62bd;
    border-color: #0f62bd;
}

.pop-sec {
    display: flex;
    align-items: center;
    gap: 6px;
    height: 16px;
    margin-top: 11px;
    white-space: nowrap;
}

.pop-sec.assign {
    margin-top: 12px;
}

.rule {
    flex: 1;
    height: 1px;
    background: #999;
}

.form-row {
    display: flex;
    align-items: center;
    height: 18px;
    margin-top: 7px;
}

.form-row.r1 {
    height: 23px;
    margin-top: 10px;
}

.form-row label {
    width: 50px;
    text-align: right;
    margin-right: 4px;
}

.text-input {
    width: 123px;
    height: 23px;
    border: 1px solid #a0a0a0;
}

.more-btn {
    width: 22px;
    height: 23px;
    margin-left: 3px;
    border: 1px solid #aaa;
    background: #dcdcdc;
    text-align: center;
}

.select {
    display: flex;
    align-items: center;
    justify-content: space-between;
    width: 148px;
    height: 19px;
    padding: 0 5px 0 2px;
    border: 1px solid #eee;
    border-bottom-color: #999;
    font-size: 12px;
    letter-spacing: 0;
    white-space: nowrap;
}

.scope-btn {
    height: 21px;
    margin: 4px 4px 0 4px;
    padding: 1px 0 0 38px;
    border: 1px solid #ccc;
}

.scope-min {
    height: 16px;
    margin-top: 3px;
    padding-left: 33px;
}

.pop-sec.opt {
    margin-top: 14px;
}

.opt-check {
    margin-top: 6px;
    padding-left: 8px;
}

.align-popup {
    left: 385px;
    top: 589px;
    width: 198px;
    height: 182px;
    padding: 6px 6px 0 9px;
}

.pop-row {
    display: grid;
    grid-template-columns: 85px 85px;
    column-gap: 10px;
}

.pop-row.auto {
    margin-top: 7px;
}

.pop-row.icons {
    height: 24px;
    margin-top: 5px;
}

.pop-row.head.second {
    margin-top: 10px;
}

.pop-head {
    display: flex;
    align-items: center;
    gap: 6px;
    height: 16px;
    white-space: nowrap;
}

.auto-btn {
    width: 75px;
    height: 23px;
    margin-left: 5px;
    line-height: 21px;
    text-align: center;
    border: 1px solid transparent;
}

.auto-btn.on {
    background: #bddcf4;
    border-color: #0f6fc6;
}

.icon-set {
    display: flex;
    margin-left: 5px;
}

.ic {
    display: flex;
    align-items: center;
    justify-content: center;
    width: 25px;
    height: 24px;
}

.ic.picked {
    border: 1px solid #777;
}

.rot {
    font-size: 14px;
    font-weight: 700;
    color: #555;
}

.rot.left {
    transform: rotate(-90deg);
}

.rot.right {
    transform: rotate(90deg);
}

.pop-row.last {
    height: 26px;
    margin-top: 4px;
}

.v-bottom {
    padding-top: 10px;
}

.v-top {
    padding-bottom: 10px;
}

.wrap-set {
    display: flex;
    justify-content: space-between;
    align-items: center;
    height: 18px;
    margin-top: 5px;
    padding: 0 13px 0 11px;
    color: #444;
}

.red-box {
    position: absolute;
    left: 435px;
    top: 622px;
    width: 71px;
    height: 65px;
    border: 4px solid #f00;
}
```
